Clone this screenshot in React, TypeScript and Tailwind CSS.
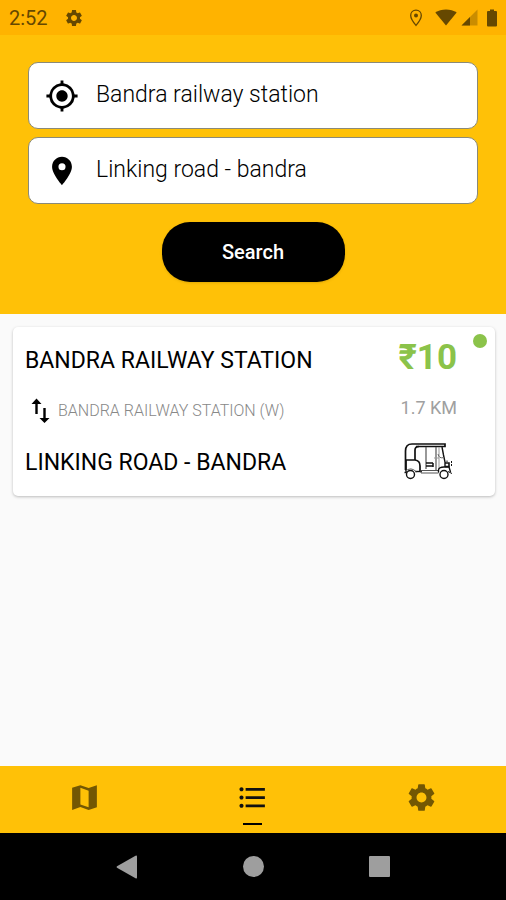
import type { ReactNode } from "react";
import {
  MdFormatListBulleted,
  MdLocationOn,
  MdMyLocation,
  MdSettings,
} from "react-icons/md";

function StatusBar() {
  return (
    <div className="flex h-[35px] items-center justify-between bg-[#ffb300] pr-2 pl-[9px] text-[#664800]">
      <div className="flex items-center gap-4">
        <span className="text-[20px] leading-6">2:52</span>
        <MdSettings size={20} aria-hidden="true" />
      </div>
      <div className="flex items-center gap-1" aria-hidden="true">
        <svg width="14" height="18" viewBox="0 0 14 18" fill="none" className="mr-2">
          <path
            d="M7 1.2C3.9 1.2 1.7 3.5 1.7 6.4C1.7 10 7 16.4 7 16.4S12.3 10 12.3 6.4C12.3 3.5 10.1 1.2 7 1.2Z"
            stroke="currentColor"
            strokeWidth="1.3"
          />
          <circle cx="7" cy="6.4" r="2" fill="currentColor" />
        </svg>
        <svg width="22" height="17" viewBox="0 0 22 17" fill="currentColor">
          <path d="M11 16.5L0.3 3.6C3.3 1.5 7 0.4 11 0.4S18.7 1.5 21.7 3.6Z" />
        </svg>
        <svg width="17" height="17" viewBox="0 0 17 17" fill="currentColor">
          <path d="M16.5 0.5V16.5H0.5Z" opacity="0.35" />
          <path d="M9 8V16.5H0.5Z" />
        </svg>
        <svg width="12" height="18" viewBox="0 0 12 18" fill="currentColor" className="ml-1">
          <path d="M4 0.5H8V2H10Q11 2 11 3V16.5Q11 17.5 10 17.5H2Q1 17.5 1 16.5V3Q1 2 2 2H4Z" />
        </svg>
      </div>
    </div>
  );
}

type PlaceFieldProps = { id: string; label: string; value: string; icon: ReactNode };

function PlaceField({ id, label, value, icon }: PlaceFieldProps) {
  return (
    <div className="flex h-[67px] items-center gap-[17px] rounded-[10px] border border-[#8a8a78] bg-white px-4 text-black">
      <label htmlFor={id} aria-label={label}>
        {icon}
      </label>
      <input
        id={id}
        type="text"
        defaultValue={value}
        className="min-w-0 flex-1 bg-transparent pb-0.5 text-[23px] leading-7 font-light text-black outline-none"
      />
    </div>
  );
}

function SearchPanel() {
  return (
    <form
      className="flex flex-col gap-2 bg-[#ffc107] px-7 pt-[27px] pb-8"
      onSubmit={(event) => event.preventDefault()}
    >
      <PlaceField
        id="from"
        label="From"
        value="Bandra railway station"
        icon={<MdMyLocation size={34} />}
      />
      <PlaceField
        id="to"
        label="To"
        value="Linking road - bandra"
        icon={<MdLocationOn size={34} />}
      />
      <button
        type="submit"
        className="mt-[10px] h-[60px] w-[183px] self-center rounded-[28px] bg-black text-[20px] font-medium text-white shadow"
      >
        Search
      </button>
    </form>
  );
}

function SwapArrows() {
  return (
    <svg width="20" height="26" viewBox="0 0 20 26" fill="none" aria-hidden="true">
      <path d="M6.5 16V4M14.5 10V22" stroke="#000" strokeWidth="2.4" />
      <path d="M6.5 0.5L11.500 6H1.500ZM14.500 25L9.500 20H19.500Z" fill="#000" />
    </svg>
  );
}

function AutoRickshaw() {
  return (
    <svg
      width="52"
      height="38"
      viewBox="0 0 52 38"
      fill="none"
      stroke="#111"
      strokeWidth="1.4"
      role="img"
      aria-label="Auto rickshaw"
    >
      <path d="M2.500 28V9Q2.500 2 9 2H42V4.500H13" strokeWidth="1.700" />
      <path d="M1.500 30.500H3V18H12Q17 18.500 17 24V29" strokeWidth="1.700" />
      <path d="M12 18V8Q12 4.500 16 4.500" strokeWidth="1.700" />
      <path d="M12 29.500H19" />
      <path d="M23 5V27M33 5V29" stroke="#555" strokeWidth="1.2" />
      <path d="M36 5V27M31 16H36" stroke="#999" strokeWidth="1" />
      <path d="M23 21H30M23 24H30M30 21V25" strokeWidth="1.500" />
      <path d="M18 28.500H35.500V31H18Z" stroke="#555" strokeWidth="1" />
      <path d="M39 5L40.500 13L42 20V25" />
      <path d="M35 12Q36 17 41 15.500" stroke="#666" strokeWidth="1" />
      <path d="M35.500 30V28Q36 25 41 25H46L47.500 30" />
      <path d="M42 21H46V24.500H42" strokeWidth="1.600" />
      <path d="M48.500 19V24M44 18.500V20" strokeWidth="1" strokeDasharray="2 1" />
      <path d="M2 29.500Q8 24 13.500 30" stroke="#666" strokeWidth="1" />
      <circle cx="7.500" cy="32.500" r="4" />
      <circle cx="41" cy="32.500" r="4" />
      <path d="M45 29.500L49 31.500" strokeWidth="1" />
    </svg>
  );
}

function FareCard() {
  return (
    <article className="relative flex h-[169px] justify-between rounded-[5px] bg-white pt-[17px] pr-[38px] pb-3 pl-3 shadow-[0_1px_3px_rgba(0,0,0,0.25)]">
      <span className="absolute top-[7px] right-2 size-[14px] rounded-full bg-[#8bc34a]" />
      <div className="flex flex-col justify-between">
        <h2 className="text-[23px] leading-[34px] font-normal text-black">
          BANDRA RAILWAY STATION
        </h2>
        <p className="flex items-center gap-2 pb-0.5 pl-[5px] text-[16px] leading-6 font-light text-[#888]">
          <SwapArrows />
          BANDRA RAILWAY STATION (W)
        </p>
        <h2 className="pb-1 text-[23px] leading-[34px] font-normal text-black">
          LINKING ROAD - BANDRA
        </h2>
      </div>
      <div className="flex flex-col items-end">
        <strong className="text-[35px] leading-7 font-bold text-[#8bc34a]">₹10</strong>
        <span className="mt-6 text-[18px] leading-6 text-[#a0a0a0]">1.7 KM</span>
        <div className="mt-[22px] pr-0.5">
          <AutoRickshaw />
        </div>
      </div>
    </article>
  );
}

function MapIcon() {
  return (
    <svg width="33" height="33" viewBox="0 0 24 24" fill="currentColor" aria-hidden="true">
      <path
        fillRule="evenodd"
        d="M3 4.900L9 3L15 5.100L21 3V19.100L15 21L9 18.900L3 21ZM9 4.900V17L15 19.100V7Z"
      />
    </svg>
  );
}

function TabBar() {
  return (
    <nav className="grid h-[67px] grid-cols-3 bg-[#ffc107] text-[#735703]">
      <button type="button" aria-label="Map" className="flex justify-center pt-[15px]">
        <MapIcon />
      </button>
      <button
        type="button"
        aria-label="List"
        aria-current="page"
        className="flex flex-col items-center gap-[9px] pt-[15px] text-[#111]"
      >
        <MdFormatListBulleted size={33} />
        <span className="h-[2px] w-[19px] bg-black" />
      </button>
      <button type="button" aria-label="Settings" className="flex justify-center pt-[15px]">
        <MdSettings size={33} />
      </button>
    </nav>
  );
}

function SystemBar() {
  return (
    <div className="flex h-[67px] items-center justify-center gap-[105px] bg-black text-[#9e9e9e]">
      <button type="button" aria-label="Back">
        <svg width="22" height="24" viewBox="0 0 22 24" fill="currentColor">
          <path d="M1 11.300L19.500 0.700Q21 0 21 1.500V22.500Q21 24 19.500 23.200L1 12.700Q0 12 1 11.300Z" />
        </svg>
      </button>
      <button type="button" aria-label="Home" className="size-[21px] rounded-full bg-current" />
      <button type="button" aria-label="Recent apps" className="size-[21px] rounded-[1px] bg-current" />
    </div>
  );
}

export default function App() {
  return (
    <div className="flex min-h-screen flex-col bg-[#fafafa] font-[Roboto,sans-serif]">
      <StatusBar />
      <SearchPanel />
      <main className="flex-1 pt-[13px] pr-[11px] pl-[13px]">
        <FareCard />
      </main>
      <TabBar />
      <SystemBar />
    </div>
  );
}
